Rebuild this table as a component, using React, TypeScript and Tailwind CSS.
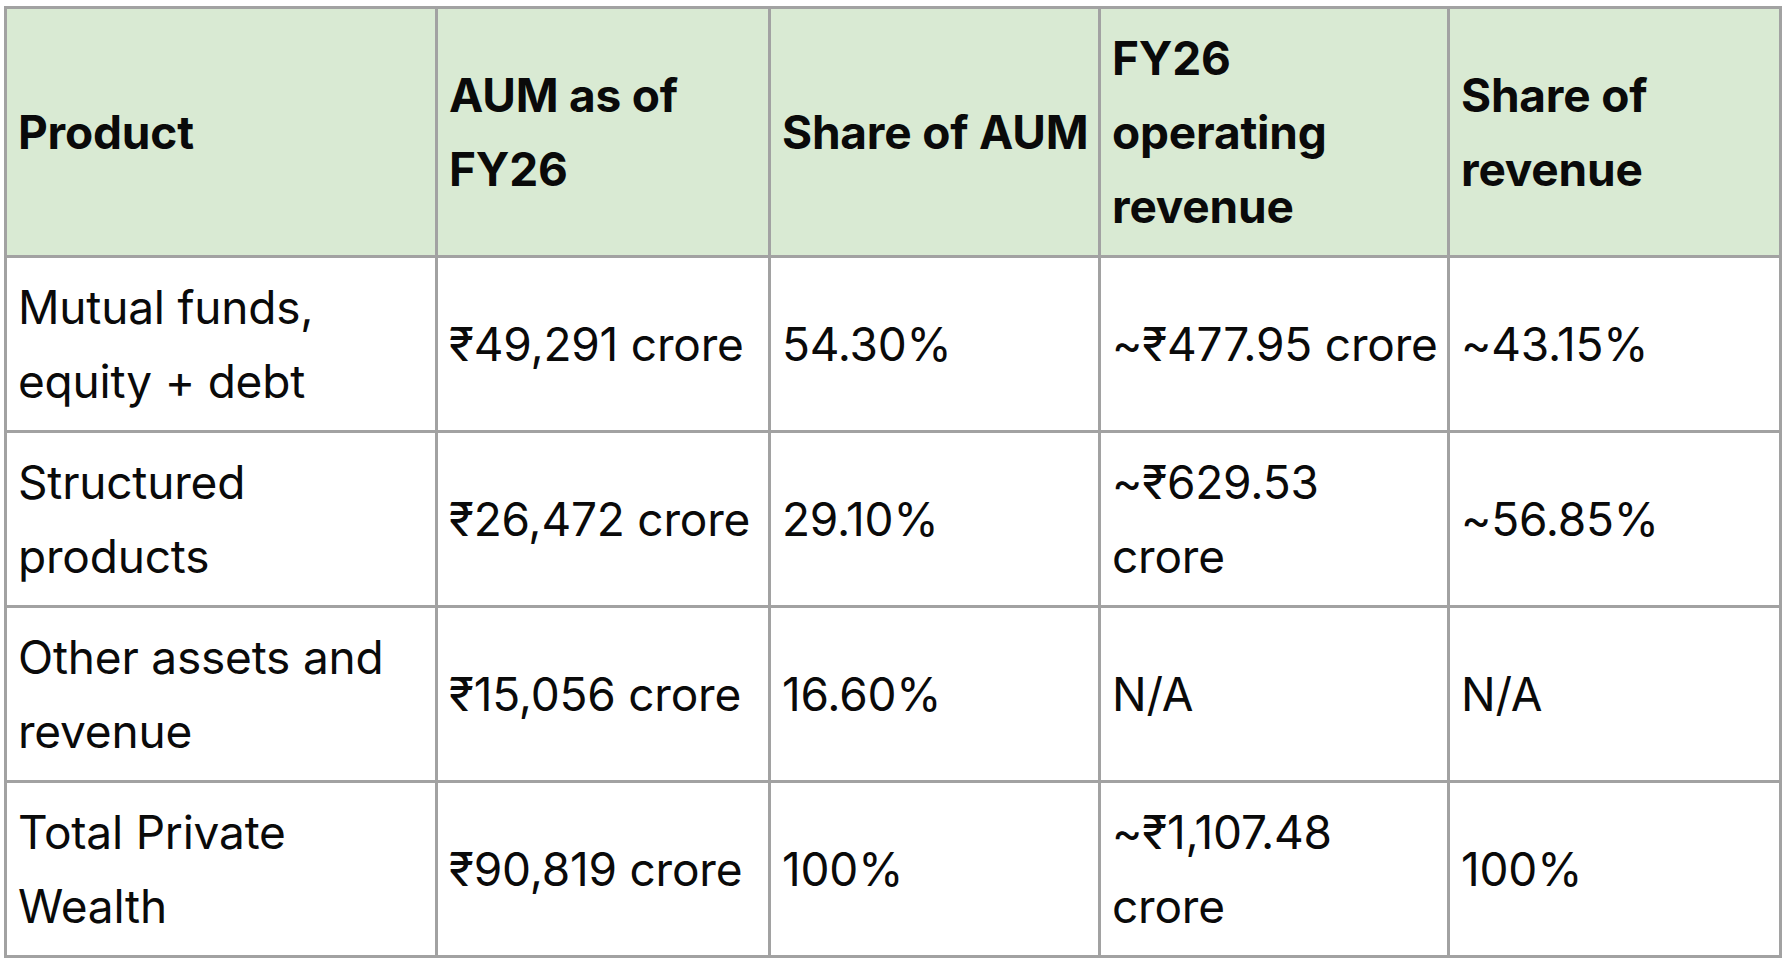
import React from "react";

type Row = {
  product: React.ReactNode;
  aum: React.ReactNode;
  share: React.ReactNode;
  revenue: React.ReactNode;
  revenueShare: React.ReactNode;
};

const rows: Row[] = [
  {
    product: (
      <>
        Mutual funds,
        <br />
        equity + debt
      </>
    ),
    aum: "₹49,291 crore",
    share: "54.30%",
    revenue: "~₹477.95 crore",
    revenueShare: "~43.15%",
  },
  {
    product: (
      <>
        Structured
        <br />
        products
      </>
    ),
    aum: "₹26,472 crore",
    share: "29.10%",
    revenue: (
      <>
        ~₹629.53
        <br />
        crore
      </>
    ),
    revenueShare: "~56.85%",
  },
  {
    product: (
      <>
        Other assets and
        <br />
        revenue
      </>
    ),
    aum: "₹15,056 crore",
    share: "16.60%",
    revenue: "N/A",
    revenueShare: "N/A",
  },
  {
    product: (
      <>
        Total Private
        <br />
        Wealth
      </>
    ),
    aum: "₹90,819 crore",
    share: "100%",
    revenue: (
      <>
        ~₹1,107.48
        <br />
        crore
      </>
    ),
    revenueShare: "100%",
  },
];

const headCell =
  "border-[3px] border-[#a2a2a2] px-[11px] py-0 text-left align-middle font-bold text-[46px] leading-[74px] tracking-[-0.2px] whitespace-nowrap";
const bodyCell =
  "border-[3px] border-[#a2a2a2] px-[11px] py-0 align-middle text-[46px] leading-[74px] tracking-[-0.2px] whitespace-nowrap";

export default function App() {
  return (
    <div
      className="min-h-[962px] w-[1784px] bg-white pl-[4px] pt-[6px] text-[#0a0a0a]"
      style={{ fontFamily: "Inter, 'Noto Sans', sans-serif" }}
    >
      <table className="w-[1775px] table-fixed border-collapse border-[3px] border-[#a2a2a2]">
        <colgroup>
          <col className="w-[431px]" />
          <col className="w-[333px]" />
          <col className="w-[330px]" />
          <col className="w-[349px]" />
          <col className="w-[332px]" />
        </colgroup>
        <thead>
          <tr className="h-[249px] bg-[#d9ead3]">
            <th className={headCell}>Product</th>
            <th className={headCell}>
              AUM as of
              <br />
              FY26
            </th>
            <th className={headCell}>Share of AUM</th>
            <th className={headCell}>
              FY26
              <br />
              operating
              <br />
              revenue
            </th>
            <th className={headCell}>
              Share of
              <br />
              revenue
            </th>
          </tr>
        </thead>
        <tbody>
          {rows.map((row, i) => (
            <tr key={i} className="h-[175px]">
              <td className={bodyCell}>{row.product}</td>
              <td className={bodyCell}>{row.aum}</td>
              <td className={bodyCell}>{row.share}</td>
              <td className={bodyCell}>{row.revenue}</td>
              <td className={bodyCell}>{row.revenueShare}</td>
            </tr>
          ))}
        </tbody>
      </table>
    </div>
  );
}
